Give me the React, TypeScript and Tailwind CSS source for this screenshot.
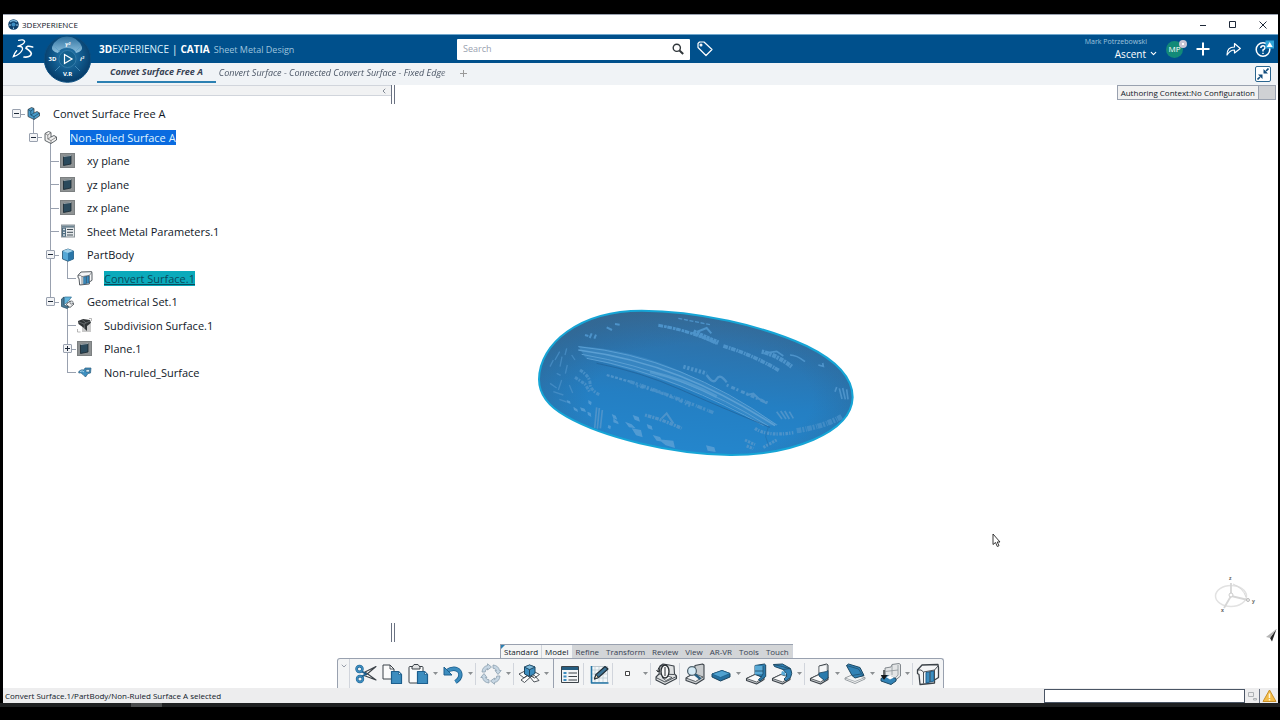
import React, { useState } from "react";
import { ChevronDown, ChevronLeft } from "lucide-react";
import clsx from "clsx";

interface TreeNode {
  id: string;
  label: string;
  // one letter per guide column: "." empty, "|" line, "t" branch, "l" last branch, "r" root
  guides: string;
  toggle?: "plus" | "minus";
  icon: React.ReactNode;
  tone?: "selected" | "linked";
  open?: boolean;
}

interface Tool {
  id: string;
  label: string;
  icon: React.ReactNode;
  menu?: boolean;
  divider?: "short" | "full";
}

const INK = "#3b4248";
const BLUE = "#3c8dbf";
const DEEP = "#1d5f8e";
const PALE = "#f4f5f6";
const GREY = "#c9cdd0";

/* ---------- tree icons ---------- */

const PartIcon = ({ fill, side }: { fill: string; side: string }) => (
  <svg width="15" height="15" viewBox="0 0 15 15" aria-hidden="true">
    <path
      d="M2 3.5 5.5 1.5 8 2.5V7l3-1.5 2.5 1.5v3L8 13.5 2 10.5Z"
      fill={fill}
      stroke={INK}
      strokeWidth=".8"
      strokeLinejoin="round"
    />
    <path d="M2 3.5 4.8 5V9L8 10.6 13.5 7M8 10.6v2.9M4.8 5 8 2.7M4.8 9 8 7" fill="none" stroke={side} strokeWidth=".7" />
  </svg>
);

const PlaneIcon = () => (
  <svg width="15" height="15" viewBox="0 0 15 15" aria-hidden="true">
    <rect x=".5" y=".5" width="14" height="14" fill="#8f9394" stroke="#7c8081" />
    <path d="M3.5 3.5 11 2.5v8.5l-7.5 1.5Z" fill="#2b4a5c" stroke="#16262f" strokeWidth=".8" />
    <path d="M3.5 3.5 11 2.5" stroke="#d5dde0" strokeWidth=".7" />
  </svg>
);

const ParametersIcon = () => (
  <svg width="14" height="14" viewBox="0 0 14 14" aria-hidden="true">
    <rect x=".5" y="1" width="13" height="12" fill="#e6e9eb" stroke="#8c9499" />
    <rect x="1" y="1.5" width="12" height="2.2" fill="#6f8592" />
    <rect x="1" y="3.7" width="4" height="9" fill="#4e6c80" />
    <path d="M2.2 5.5h1.6M2.2 8.3h1.6M2.2 11h1.6" stroke="#fff" strokeWidth="1.3" />
    <path d="M6 5.5h6M6 8.3h6M6 11h6" stroke="#3e4c55" strokeWidth="1" />
  </svg>
);

const BodyIcon = () => (
  <svg width="14" height="14" viewBox="0 0 14 14" aria-hidden="true">
    <path d="M1.5 3 7 1l5.5 2v8L7 13.2 1.5 11Z" fill="#55a8d6" stroke="#23506e" strokeWidth=".8" strokeLinejoin="round" />
    <path d="M1.5 3 7 5l5.5-2L7 1Z" fill="#9ed0ea" />
    <path d="M7 5v8.2L12.5 11V3Z" fill="#2a76a8" />
  </svg>
);

const ConvertIcon = ({ size }: { size: number }) => (
  <svg width={size} height={size} viewBox="0 0 24 24" aria-hidden="true">
    <path
      d="M1.500 8 6 3 22 2.500l.5 3v10L18.500 18v3L9 22l-5 .5-1-10-1.500-1Z"
      fill={PALE}
      stroke={INK}
      strokeWidth="1.300"
      strokeLinejoin="round"
    />
    <path d="m10 10.500 8-1.500v10l-8 2Z" fill={BLUE} stroke={DEEP} strokeWidth="1" />
    <path d="M1.500 8H5l2.500 2 11-2L22 4M7.500 10v11.500M18.500 8v10M14 9.500V20" fill="none" stroke={INK} strokeWidth=".9" />
  </svg>
);

const GeoSetIcon = () => (
  <svg width="15" height="14" viewBox="0 0 15 14" aria-hidden="true">
    <path d="M1.500 4 4 2v8l5 2-2 1.500-5.500-2Z" fill="#4c7c98" stroke="#21465b" strokeWidth=".7" />
    <path d="M4.500 2h7L8.500 6 4.500 9.500Z" fill="#62b5dd" stroke="#2f6d90" strokeWidth=".7" />
    <path d="m6 9.500 4-3.500 4 3-4 3.500Z" fill="#f3f3f3" stroke={INK} strokeWidth=".8" />
    <circle cx="11.500" cy="7.500" r="1.600" fill="#dfe3e5" stroke={INK} strokeWidth=".6" />
  </svg>
);

const SubdivisionIcon = () => (
  <svg width="15" height="15" viewBox="0 0 15 15" aria-hidden="true">
    <path d="M5 6h9v8H5Z" fill="#c9c9c9" />
    <path d="M1 3 6 1l7 1 1 3-4 3v5L7 10 1.500 6Z" fill="#2f3335" />
    <path d="M2 4l5 2 6-3M7 6l.5 4M5 1.500 9 5" stroke="#84898c" strokeWidth=".6" fill="none" />
    <path d="M.5 14v-3M.5 14h3M14.500 3V.5H12" stroke="#999" strokeWidth=".7" fill="none" />
  </svg>
);

const SurfaceIcon = () => (
  <svg width="14" height="12" viewBox="0 0 14 12" aria-hidden="true">
    <path d="M.8 5.500Q3 3 6 4l1-2h6l-.5 5L10 7.500 7.500 11 5 8.500Q3 6 .8 7Z" fill="#3d8fc0" stroke="#2c5d7c" strokeWidth=".7" />
    <path d="M8 3.500h3.500V6H8Z" fill="#d9eaf3" stroke="#2c5d7c" strokeWidth=".6" />
    <path d="M2 5.500q2.500-1.500 4 .5" stroke="#a8d4ea" fill="none" />
  </svg>
);

/* ---------- toolbar icons ---------- */

const Icon = ({ children }: { children: React.ReactNode }) => (
  <svg width="24" height="24" viewBox="0 0 24 24" fill="none" strokeLinejoin="round" aria-hidden="true">
    {children}
  </svg>
);

const CutIcon = () => (
  <Icon>
    <path d="M10 10.500 22 4.500l-10 8.500M10 13.500l12 4.500-11-8" fill="#fff" stroke={INK} strokeWidth="1.100" />
    <circle cx="5.500" cy="7" r="2.900" stroke={DEEP} strokeWidth="2.600" />
    <circle cx="6" cy="17" r="2.900" stroke={DEEP} strokeWidth="2.600" />
    <circle cx="5.500" cy="7" r="2.900" stroke={BLUE} strokeWidth="1.500" />
    <circle cx="6" cy="17" r="2.900" stroke={BLUE} strokeWidth="1.500" />
    <path d="M8 9.500 12 12l-4 2.500" stroke={DEEP} strokeWidth="2" />
  </Icon>
);

const Sheet = () => (
  <>
    <path d="M11.500 9.500h7l3 3V21.500h-10Z" fill={BLUE} stroke={DEEP} strokeWidth="1.200" />
    <path d="M18.500 9.500v3h3Z" fill="#cfe5f1" stroke={DEEP} strokeWidth=".8" />
  </>
);

const CopyIcon = () => (
  <Icon>
    <path d="M3 3h7l4 4v10H3Z" fill="#fbfbfb" stroke={INK} strokeWidth="1" />
    <path d="M10 3v4h4" stroke={INK} strokeWidth=".9" />
    <Sheet />
  </Icon>
);

const PasteIcon = () => (
  <Icon>
    <rect x="3" y="4.500" width="14" height="16.500" rx="1" fill="#fbfbfb" stroke={INK} strokeWidth="1" />
    <path d="M6 7V5l2-2.500h4L14 5v2Z" fill="#e0e2e3" stroke={INK} />
    <Sheet />
  </Icon>
);

const UndoIcon = () => (
  <Icon>
    <path d="M5 9.500Q14 4 18.500 9.500 21.500 15.500 14.500 20" stroke={DEEP} strokeWidth="4.200" />
    <path d="M5 9.500Q14 4 18.500 9.500 21.500 15.500 14.500 20" stroke={BLUE} strokeWidth="2.800" />
    <path d="M3 5v8h8Z" fill={BLUE} stroke={DEEP} />
  </Icon>
);

const UpdateIcon = () => (
  <Icon>
    <g fill="#c6d6e3" stroke="#8b9fae" strokeWidth=".8">
      {[0, 90, 180, 270].map((turn) => (
        <path key={turn} transform={`rotate(${turn} 12 12)`} d="M3 10Q3.500 4.500 8.500 3.500V1.800L12.500 5 8.500 8V6.500Q6.300 7.300 6.200 10Z" />
      ))}
    </g>
  </Icon>
);

const AssemblyIcon = () => (
  <Icon>
    <path d="m2 12 5-2.500 5 3-5 3.500ZM12 13l5-3.500 5.500 3-5 3.500ZM4 18l6-4.500 3 2-5.500 5ZM13 15l4.500-1.500 4.500 5-5 1.500Z" fill="#fdfdfd" stroke={INK} strokeWidth=".9" />
    <path d="m7.500 5 5-2 5.500 2v6.500l-5.500 3-5-2.500Z" fill={BLUE} stroke="#1f4660" />
    <path d="m7.500 5 5 2.500L18 5M12.500 7.500V14" stroke="#1f4660" />
    <path d="m7.500 5 5-2 5.500 2-5.500 2.500Z" fill="#7fbbdc" stroke="#1f4660" strokeWidth=".7" />
  </Icon>
);

const ListIcon = () => (
  <Icon>
    <rect x="3.500" y="4.500" width="17" height="16" fill="#f3f5f6" stroke={INK} />
    <rect x="4" y="5" width="16" height="3" fill="#265d80" />
    <path d="M5.500 11h3M5.500 14.500h3M5.500 18h3" stroke={BLUE} strokeWidth="2" />
    <path d="M10.500 11h8.500M10.500 14.500h8.500M10.500 18h8.500" stroke={INK} strokeWidth="1.200" />
  </Icon>
);

const SketchIcon = () => (
  <Icon>
    <path d="M4.500 4.500h16v16h-16Z" fill="#f3f7f9" stroke="#a5b4bd" strokeWidth=".7" />
    <path d="M8 4.500v16M12 4.500v16M16 4.500v16M4.500 8h16M4.500 12h16M4.500 16h16" stroke="#b8c6ce" strokeWidth=".7" />
    <path d="M4.500 4v17h17" stroke="#2475a5" strokeWidth="1.600" />
    <path d="m7.500 17 1.500-4.500L18 4.500l3 2.500-9.500 8.500Z" fill="#3e7698" stroke="#202d36" strokeWidth="1.100" />
    <path d="m7.500 17 1.500-4.500 2.500 3Z" fill="#f5e3c5" stroke="#202d36" />
  </Icon>
);

const PointIcon = () => (
  <Icon>
    <rect x="9.500" y="9.500" width="4" height="4" fill="#fff" stroke="#444" />
  </Icon>
);

const StampIcon = () => (
  <Icon>
    <path d="m2 15 3-3 1-8 3-2 6 1 5 1 .5 8 2 2v2.500L11 22.500 2 18Z" fill="#dfe1e2" stroke={INK} strokeWidth="1.100" />
    <path d="m2 15.500 9 4.500 11.500-5.500M5 12l15 .5" stroke={INK} strokeWidth=".9" />
    <path d="m8 15.500 4-2 6 2-6 3Z" fill="#fff" stroke={INK} strokeWidth=".8" />
    <ellipse cx="11" cy="9.500" rx="4" ry="6.500" fill="#f7f7f7" stroke="#24292d" strokeWidth="1.300" />
    <path d="M11 5v9M4 9.500Q4 4 8.500 3.500M2.500 8 4 10l2-1.500" stroke="#24292d" />
  </Icon>
);

const InspectIcon = () => (
  <Icon>
    <path d="m12 3.500 7.500-1.500L21 3v14l-8 5L3 18.500v-2.500l8-5Z" fill="#c9ccce" stroke={INK} strokeWidth="1.100" />
    <path d="M3 16 11 11.500 20 15l-7.500 4.500Z" fill={PALE} stroke={INK} strokeWidth=".8" />
    <path d="m11.500 12 6 5" stroke="#255e82" strokeWidth="2.400" />
    <circle cx="9" cy="9" r="4.400" fill="#d4eaf5" stroke="#51636e" strokeWidth="1.300" />
  </Icon>
);

const WallIcon = () => (
  <Icon>
    <path d="m3 12 10-3.500 8 3v3.500l-9.500 4-8.500-4Z" fill="#2470a1" stroke="#1b455f" strokeWidth="1" />
    <path d="m3 12 10-3.500 8 3-9.500 4Z" fill="#4fa2d1" stroke="#1b5a82" strokeWidth=".7" />
  </Icon>
);

// flat base plate shared by the sheet metal commands
const Base = () => (
  <>
    <path d="m2.500 16.500 8.500-4 9 3v2l-7.500 4.500-10-3.500Z" fill={GREY} stroke={INK} strokeWidth="1.100" />
    <path d="m2.500 16.500 8.500-4 9 3-7.500 4.500Z" fill="#fbfbfb" stroke={INK} strokeWidth=".8" />
  </>
);

const WallEdgeIcon = () => (
  <Icon>
    <Base />
    <path d="m11 3.500 9.500-1.500 1.200 1v11.500L16 19l-1.500-1.500 3-2.500-6.500-3Z" fill="#2a7bad" stroke="#1e4964" strokeWidth="1" />
    <path d="m11 3.500 8 .5v8l-8 .500Z" fill="#5aaad6" />
    <path d="M11 9h8M19 4v8l-2 3" stroke="#1e4964" strokeWidth=".8" />
  </Icon>
);

const ExtrudeIcon = () => (
  <Icon>
    <Base />
    <path d="m3.500 2.500 9-.5 8 4.500q2.500 5 0 9L16 19l-2-2q4-2 2.500-5.500L13 7.500 4.500 4.500Z" fill="#3283b6" stroke="#1e4964" strokeWidth="1" />
    <path d="m3.500 2.500 9 2 8 2.500M13 7.500l7-1" stroke="#1e4964" strokeWidth=".8" />
    <path d="m12 9 3 1 1 4-5-1.500Z" fill="#5aaad6" />
  </Icon>
);

const FlangeIcon = () => (
  <Icon>
    <Base />
    <path d="m11 4 7.500-2L20 3v13l-4 2-5-6Z" fill="#cfd2d4" stroke={INK} strokeWidth="1" />
    <path d="m11.500 4.500 6.500-1v6l-6.500 1.500Z" fill="#f4f5f6" />
    <path d="m11 11 7.500-1.500L20 8.500v7.500l-3.500 2.500-5.500-4.500Z" fill="#2a7bad" stroke="#1e4964" strokeWidth=".8" />
  </Icon>
);

const UnfoldIcon = () => (
  <Icon>
    <path d="m2 16 8-3.500 12 3v1.500l-10 4.500-10-4Z" fill="#f4f5f5" stroke="#8d9499" strokeWidth=".9" />
    <path d="m2 16 10 3.500 10-4" stroke="#8d9499" strokeWidth=".7" />
    <path d="m3.500 3.500 2-1.500L17 5.500l4 8-9 2.500-3-2.500Z" fill="#3283b6" stroke="#1e4964" strokeWidth="1" />
    <path d="m3.500 3.500 12 3.500 4.500 7M9 13.500l9-1.500" stroke="#1e4964" strokeWidth=".7" />
  </Icon>
);

const FoldIcon = () => (
  <Icon>
    <path d="m7 6 6-1 1-2.500 7-1 1.500 1V14l-6 5-9-3Z" fill="#e2e4e5" stroke="#767d82" strokeWidth=".9" />
    <path d="M7 9.500 20 8M14 3v10M20 3v10l-4 4" stroke="#8d9499" strokeWidth=".8" />
    <path d="m3 16.500 6-3 9 3v2.500l-5 3.500-10-3.500Z" fill="#3283b6" stroke="#1e4964" strokeWidth="1" />
    <path d="m8 15 4-1.500 4 2-4 2Z" fill="#fff" />
    <path d="M6 8v8M3.500 13.500 6 17l2.500-3.500Z" fill="#15191c" stroke="#15191c" strokeWidth="1.200" />
  </Icon>
);

/* ---------- data ---------- */

const treeNodes: TreeNode[] = [
  { id: "root", label: "Convet Surface Free A", guides: "r", toggle: "minus", icon: <PartIcon fill="#4a9ccb" side="#17435f" />, open: true },
  { id: "shape", label: "Non-Ruled Surface A", guides: ".l", toggle: "minus", icon: <PartIcon fill="#f1f1f1" side="#666" />, tone: "selected", open: true },
  { id: "xy", label: "xy plane", guides: "..t", icon: <PlaneIcon /> },
  { id: "yz", label: "yz plane", guides: "..t", icon: <PlaneIcon /> },
  { id: "zx", label: "zx plane", guides: "..t", icon: <PlaneIcon /> },
  { id: "params", label: "Sheet Metal Parameters.1", guides: "..t", icon: <ParametersIcon /> },
  { id: "body", label: "PartBody", guides: "..t", toggle: "minus", icon: <BodyIcon />, open: true },
  { id: "convert", label: "Convert Surface.1", guides: "..|l", icon: <ConvertIcon size={16} />, tone: "linked" },
  { id: "geoset", label: "Geometrical Set.1", guides: "..l", toggle: "minus", icon: <GeoSetIcon />, open: true },
  { id: "subdiv", label: "Subdivision Surface.1", guides: "...t", icon: <SubdivisionIcon /> },
  { id: "plane1", label: "Plane.1", guides: "...t", toggle: "plus", icon: <PlaneIcon /> },
  { id: "nonruled", label: "Non-ruled_Surface", guides: "...l", icon: <SurfaceIcon /> },
];

const tools: Tool[] = [
  { id: "cut", label: "Cut", icon: <CutIcon /> },
  { id: "copy", label: "Copy", icon: <CopyIcon /> },
  { id: "paste", label: "Paste", icon: <PasteIcon />, menu: true },
  { id: "undo", label: "Undo", icon: <UndoIcon />, menu: true, divider: "short" },
  { id: "update", label: "Update", icon: <UpdateIcon />, menu: true, divider: "short" },
  { id: "assembly", label: "Assembly", icon: <AssemblyIcon />, menu: true, divider: "full" },
  { id: "parameters", label: "Parameters", icon: <ListIcon />, divider: "short" },
  { id: "sketch", label: "Sketch", icon: <SketchIcon />, divider: "short" },
  { id: "point", label: "Point", icon: <PointIcon />, menu: true, divider: "short" },
  { id: "stamp", label: "Stamp", icon: <StampIcon />, divider: "short" },
  { id: "recognize", label: "Recognize", icon: <InspectIcon /> },
  { id: "wall", label: "Wall", icon: <WallIcon />, menu: true },
  { id: "edge", label: "Wall on edge", icon: <WallEdgeIcon /> },
  { id: "extrude", label: "Extrusion", icon: <ExtrudeIcon />, menu: true, divider: "short" },
  { id: "flange", label: "Flange", icon: <FlangeIcon />, menu: true },
  { id: "unfold", label: "Unfold", icon: <UnfoldIcon />, menu: true },
  { id: "fold", label: "Fold", icon: <FoldIcon />, menu: true, divider: "short" },
  { id: "convert", label: "Convert surface", icon: <ConvertIcon size={24} /> },
];

const sections = ["Standard", "Model", "Refine", "Transform", "Review", "View", "AR-VR", "Tools", "Touch"];

/* ---------- header ---------- */

const Compass = () => (
  <button aria-label="Compass" className="absolute left-10 top-0 size-12">
    <svg width="48" height="48" viewBox="0 0 48 48" aria-hidden="true">
      <defs>
        <radialGradient id="dial" cx="50%" cy="45%" r="55%">
          <stop offset="0" stopColor="#2a7fb4" />
          <stop offset=".6" stopColor="#0f5688" />
          <stop offset="1" stopColor="#063a66" />
        </radialGradient>
        <linearGradient id="north" x1="0" y1="0" x2="0" y2="1">
          <stop offset="0" stopColor="#2f719f" />
          <stop offset="1" stopColor="#8cc0de" />
        </linearGradient>
      </defs>
      <circle cx="24.500" cy="24" r="23.300" fill="url(#dial)" stroke="#0a4f82" />
      <path d="M9 12Q13 2 24 1.500 35 2 39 12q1 4-6 6-2-5-9-5t-9 5q-7-2-6-6Z" fill="url(#north)" />
      <circle cx="24.500" cy="24" r="8.500" fill="#13608f" stroke="#3d83ad" strokeWidth=".7" />
      <path d="m12 12 5 5M37 12l-5 5M12 36l5-5M37 36l-5-5" stroke="#5a9dc6" strokeWidth=".7" />
      <path d="m21.500 19.500 7.500 4.500-7.500 4.500Z" stroke="#fff" strokeWidth="1.200" fill="none" />
      <g fill="#fff" fontFamily="Noto Sans, sans-serif" fontWeight="700" fontSize="6" textAnchor="middle">
        <text x="24.500" y="12" fontStyle="italic">Y²</text>
        <text x="9.500" y="26">3D</text>
        <text x="39" y="26" fontStyle="italic">i²</text>
        <text x="24.500" y="41">V.R</text>
      </g>
    </svg>
  </button>
);

const Logo = () => (
  <svg width="22" height="20" viewBox="0 0 66 60" fill="none" stroke="#fff" strokeWidth="4" strokeLinecap="round" aria-hidden="true">
    <path d="M20 4q16-4 18 4-2 9-22 14 18-2 15 10Q24 47 4 53q4-12 10-18" />
    <path d="M62 24Q42 18 42 28q14 8 16 16-2 12-22 10" strokeWidth="5" />
  </svg>
);

const TitleBar = () => (
  <div className="flex h-5 items-center border-t border-gray-400 bg-white pl-[5px] text-[8px] text-gray-900">
    <svg width="11" height="11" viewBox="0 0 11 11" aria-hidden="true">
      <circle cx="5.500" cy="5.500" r="5.300" fill="#0f3f6b" />
      <path d="M2 3q3.500-3 7 0" stroke="#7db7dc" strokeWidth="1.500" fill="none" />
      <circle cx="5.500" cy="5.500" r="2" fill="#3c8cc2" />
      <path d="M1 6h2M8 6h2M5.500 8.500v1.500" stroke="#9cc8e4" />
    </svg>
    <span className="ml-[3px]">3DEXPERIENCE</span>
    <div className="ml-auto flex text-gray-800">
      <button aria-label="Minimize" className="flex w-[30px] justify-center">
        <svg width="8" height="8" viewBox="0 0 8 8"><path d="M1 4.500h6" stroke="currentColor" /></svg>
      </button>
      <button aria-label="Maximize" className="flex w-[30px] justify-center">
        <svg width="8" height="8" viewBox="0 0 8 8"><path d="M.5.5h6v6h-6Z" stroke="currentColor" fill="none" /></svg>
      </button>
      <button aria-label="Close" className="flex w-[30px] justify-center">
        <svg width="8" height="8" viewBox="0 0 8 8"><path d="m.5.500 7 7m0-7-7 7" stroke="currentColor" /></svg>
      </button>
    </div>
  </div>
);

const Header = () => (
  <header className="relative z-10 flex h-[29px] items-center border-t border-[#6fa6cc] bg-[#00508c] text-white">
    <div className="flex w-[454px] shrink-0 items-center pl-[9px]">
      <Logo />
      <Compass />
      <div className="ml-[65px] flex items-baseline text-[10px]">
        <span className="font-bold">3D</span>
        <span className="text-sky-100">EXPERIENCE</span>
        <span className="mx-[3px]">|</span>
        <span className="font-bold">CATIA</span>
        <span className="ml-1 text-[9px] text-[#9fc4de]">Sheet Metal Design</span>
      </div>
    </div>
    <label className="flex h-[21px] w-[233px] items-center rounded-[1px] bg-white pr-[6px]">
      <input
        type="text"
        aria-label="Search"
        placeholder="Search"
        className="min-w-0 flex-1 bg-transparent px-[6px] text-[9px] text-gray-800 outline-none placeholder:text-gray-400"
      />
      <svg width="12" height="12" viewBox="0 0 12 12" fill="none" stroke="#30363a" aria-hidden="true">
        <circle cx="4.800" cy="4.800" r="3.600" strokeWidth="1.400" />
        <path d="m7.500 7.500 3.700 3.500" strokeWidth="2" />
      </svg>
    </label>
    <button aria-label="Tags" className="ml-[7px]">
      <svg width="16" height="16" viewBox="0 0 16 16" fill="none" stroke="#fff" strokeWidth="1.200" strokeLinejoin="round">
        <path d="M1 2.500 2.500 1 7 1l8 7.500-6 6L1 6.500Z" />
        <circle cx="4" cy="4" r=".9" />
      </svg>
    </button>

    <div className="ml-auto flex items-center pr-1">
      <div className="flex flex-col items-end">
        <span className="text-[7px] leading-[9px] text-[#9fc4de]">Mark Potrzebowski</span>
        <button className="mr-[-11px] flex items-center gap-[3px] text-[10px] leading-4">
          Ascent
          <ChevronDown size={9} strokeWidth={3} />
        </button>
      </div>
      <button aria-label="Profile" className="relative ml-[19px] flex size-[17px] items-center justify-center rounded-full bg-[#128a78] text-[8px]">
        MP
        <span className="absolute -right-1 -top-[1px] flex size-2 items-center justify-center rounded-full bg-[#c9c4d4]">
          <span className="size-[2px] bg-white" />
        </span>
      </button>
      <button aria-label="Add" className="ml-[13px]">
        <svg width="14" height="14" viewBox="0 0 14 14"><path d="M7 .5v13M.5 7h13" stroke="#fff" strokeWidth="2" /></svg>
      </button>
      <button aria-label="Share" className="ml-4">
        <svg width="15" height="14" viewBox="0 0 15 14" fill="none" stroke="#fff" strokeWidth="1.200" strokeLinejoin="round">
          <path d="M1 13Q1 5 8.500 5V1.500L14.300 6.500 8.500 11V8Q4 8 1 13Z" />
        </svg>
      </button>
      <button aria-label="Help" className="ml-[14px]">
        <svg width="19" height="18" viewBox="0 0 19 18" fill="none">
          <circle cx="8" cy="9.500" r="6.800" stroke="#fff" strokeWidth="1.500" />
          <path d="M5.800 8Q6 5.800 8 5.800T10 7.800Q10 9 8 10v1.500M8 12.700V14" stroke="#fff" strokeWidth="1.500" />
          <rect x="10.500" y=".5" width="8.500" height="8" fill="#2fa4d8" />
          <path d="m14.700 2 3 5h-6Z" fill="#fff" />
        </svg>
      </button>
    </div>
  </header>
);

const DocumentTabs = () => (
  <nav className="flex h-[22px] items-stretch bg-[#f0f3f6] pl-[94px] text-[9px] italic text-gray-600">
    <a href="#free-a" className="mb-[2px] flex items-center border-b-2 border-[#2b80b2] px-[13px] font-bold text-gray-700">
      Convet Surface Free A
    </a>
    <a href="#connected" className="ml-[3px] mb-[2px] flex w-[233px] items-center overflow-hidden whitespace-nowrap mask-r-from-95%">
      Convert Surface - Connected Convert Surface - Fixed Edge
    </a>
    <button aria-label="New tab" className="ml-2 mb-[2px] flex items-center">
      <svg width="7" height="7" viewBox="0 0 7 7"><path d="M3.500 0v7M0 3.500h7" stroke="#999" /></svg>
    </button>
    <button aria-label="Exit full screen" className="ml-auto mr-[7px] flex size-4 items-center justify-center self-center rounded-[2px] border border-[#2b6690] bg-white">
      <svg width="12" height="12" viewBox="0 0 12 12" fill="#124d7d" stroke="#124d7d">
        <path d="m11.500.500-2.500 2.500M.5 11.500 3 9" strokeWidth="1.600" />
        <path d="M6.500 1v4.500H11ZM5.500 11V6.500H1Z" stroke="none" />
      </svg>
    </button>
  </nav>
);

/* ---------- specification tree ---------- */

const Guide = ({ kind, toggle }: { kind: string; toggle?: "plus" | "minus" }) => (
  <span className="relative flex w-[17px] shrink-0 items-center justify-center self-stretch">
    {(kind === "|" || kind === "t") && <span className="absolute inset-y-0 left-2 w-px bg-gray-400" />}
    {kind === "l" && <span className="absolute bottom-1/2 left-2 top-0 w-px bg-gray-400" />}
    {(kind === "t" || kind === "l" || kind === "r") && <span className="absolute left-2 right-0 top-1/2 h-px bg-gray-400" />}
    {toggle && (
      <span className="relative flex size-[9px] items-center justify-center rounded-[1px] border border-gray-400 bg-gray-100">
        <span className="h-px w-[5px] bg-gray-800" />
        {toggle === "plus" && <span className="absolute h-[5px] w-px bg-gray-800" />}
      </span>
    )}
  </span>
);

const SpecTree = () => (
  <ul className="grid h-[282px] grid-rows-12 pl-[5px] text-[11px] leading-[15px] text-gray-900">
    {treeNodes.map((node) => (
      <li key={node.id} className="flex min-h-0 items-center">
        {node.guides.split("").map((kind, index) => (
          <Guide key={index} kind={kind} toggle={index === node.guides.length - 1 ? node.toggle : undefined} />
        ))}
        <span className="relative flex w-[17px] shrink-0 items-center justify-center self-stretch">
          {node.open && <span className="absolute bottom-0 left-2 top-1/2 w-px bg-gray-400" />}
          <span className="relative">{node.icon}</span>
        </span>
        <button
          className={clsx(
            "ml-[11px] whitespace-nowrap",
            node.tone === "selected" && "bg-[#0a6be0] text-sky-100",
            node.tone === "linked" && "bg-[#0aaabb] text-[#0b4a5c] underline"
          )}
        >
          {node.label}
        </button>
      </li>
    ))}
  </ul>
);

/* ---------- 3D view ---------- */

const Model = () => (
  <svg width="330" height="165" viewBox="0 0 990 495" className="absolute left-[135px] top-[215px]" aria-label="Non-ruled surface">
    <defs>
      <linearGradient id="shade" x1=".6" y1="0" x2=".4" y2="1">
        <stop offset="0" stopColor="#3a6d99" />
        <stop offset=".3" stopColor="#2c74ae" />
        <stop offset=".6" stopColor="#247fc3" />
        <stop offset="1" stopColor="#2488cf" />
      </linearGradient>
      <radialGradient id="rim" cx=".52" cy=".6" r=".56">
        <stop offset=".6" stopColor="#2f5f88" stopOpacity="0" />
        <stop offset="1" stopColor="#355f82" stopOpacity=".5" />
      </radialGradient>
      <clipPath id="hull">
        <path d="M27 238C28 130 150 32 335 32 500 32 700 78 830 138 920 182 968 235 968 292 965 400 780 466 600 465 420 462 220 412 110 350 55 320 27 285 27 238Z" />
      </clipPath>
    </defs>
    <g clipPath="url(#hull)">
      <path d="M0 0h990v495H0Z" fill="url(#shade)" />
      <path d="M0 0h990v495H0Z" fill="url(#rim)" />
      {/* long reflection band */}
      <path d="M145 138Q310 150 450 213T745 375L700 378Q600 310 450 259T165 172Z" fill="#4390cb" opacity=".55" />
      <g fill="none" stroke="#5b9fd3">
        <path d="M145 140Q300 155 450 215T740 375" strokeWidth="3" />
        <path d="M145 150Q310 172 450 228T735 377" strokeWidth="5" />
        <path d="M155 163Q310 190 450 244T715 378" strokeWidth="3" />
        <path d="M170 175Q310 200 450 257T700 376" strokeWidth="3" />
        <path d="M360 215Q470 240 560 290" strokeWidth="9" opacity=".7" />
      </g>
      <path d="M200 190Q330 215 450 268T720 382" stroke="#1f5f96" strokeWidth="2" fill="none" />
      {/* facet noise */}
      <g fill="none" stroke="#4d93ca">
        <path d="M385 76Q480 92 560 130" strokeWidth="9" strokeDasharray="14 3 8 2" />
        <path d="M490 95Q520 110 565 128" strokeWidth="14" strokeDasharray="9 2" />
        <path d="M445 55 540 74" strokeWidth="4" strokeDasharray="12 5" />
        <path d="M500 96l30-12 14 16" strokeWidth="6" />
        <path d="M580 138Q670 165 748 212" strokeWidth="11" strokeDasharray="14 3 5 2" />
        <path d="M695 155Q740 165 785 200" strokeWidth="13" strokeDasharray="7 3 12 2" />
        <path d="M700 160l40-6 20 14M780 165q20 0 45 20M865 195l15 4-2-10" strokeWidth="5" />
        <path d="M460 200 530 220" strokeWidth="12" strokeDasharray="7 5" />
        <path d="M530 225q20 30 30 12t30 10" strokeWidth="7" />
        <path d="M590 255 715 310" strokeWidth="9" strokeDasharray="6 9 12 5" />
        <path d="M650 285l20-4 15 14 25 15" strokeWidth="6" />
        <path d="M230 225 300 245" strokeWidth="7" strokeDasharray="9 4" />
        <path d="M300 245Q420 285 550 338" strokeWidth="10" strokeDasharray="15 3 7 6 3 2" opacity=".8" />
        <path d="M320 258Q400 275 480 318" strokeWidth="8" strokeDasharray="5 6 11 9" opacity=".8" />
        <path d="M345 345Q400 360 455 385" strokeWidth="10" strokeDasharray="6 3 11 3" />
        <path d="M395 355l15-15 20 30" strokeWidth="6" />
        <path d="M200 322l-6 62M208 324l-6 62M217 330l-6 55" strokeWidth="5" />
        <path d="M150 210q30 20 30 40t30 35M135 232l30 20 15 25" strokeWidth="9" strokeDasharray="10 3 5 4" opacity=".8" />
        <path d="M740 335l16 22M752 333l16 24M764 333l14 24M778 335l12 20" strokeWidth="5" />
        <path d="M928 265l8 32M938 264l8 34M950 268l4 30M915 275l5-14" strokeWidth="5" />
        <path d="M675 385Q710 410 790 398" strokeWidth="10" strokeDasharray="8 3 4 4" />
        <path d="M800 392Q880 380 935 350" strokeWidth="16" strokeDasharray="14 3 6 4 3 2" opacity=".7" />
        <path d="M645 420l30 14M650 438l20 8M700 442l40-22" strokeWidth="9" strokeDasharray="7 3" />
        <path d="M165 105l10 3M185 100l-6 14M198 104l-5 12M230 82l16 8M255 72l14 2" strokeWidth="6" />
        <path d="M75 180l14-25M90 200l6-30M105 165l5-20M60 250l20 14M70 275l30 10M95 240l-10 30M125 165l10 15M60 200l10-20M80 220l12 6M112 195l-6 26M118 255l10 24M88 298l22 8" strokeWidth="4" opacity=".7" />
      </g>
      <g fill="#5a9fd5" opacity=".85">
        <path d="M245 342l12 5 5 12-12-4ZM250 355l14 10 2 8-16-6ZM285 365l20 8 12 12-20-3ZM308 345l18 6 4 14-16-6ZM305 385l28 5 5 22-20-6ZM350 372l15 6 3 12-14-5ZM368 405l22 6 8 14-18-3ZM385 418l45 4 5 22-28-8ZM528 436l25 6 4 14-24-4Z" />
        <path d="M150 322l14 4 4 10-14-4ZM172 335l10 4 2 12-10-6ZM130 320l12 8 2 8-12-6ZM175 300l10 6-2 10-8-6ZM235 375l8 3-2 10-8-5ZM110 300l10 4 2 8-10-4Z" />
      </g>
      <path d="M715 380l-8 30 10 30" stroke="#2370ac" strokeWidth="2" fill="none" />
    </g>
    <path
      d="M27 238C28 130 150 32 335 32 500 32 700 78 830 138 920 182 968 235 968 292 965 400 780 466 600 465 420 462 220 412 110 350 55 320 27 285 27 238Z"
      fill="none"
      stroke="#16a5d6"
      strokeWidth="6"
    />
  </svg>
);

const AxisTriad = () => (
  <svg width="46" height="40" viewBox="0 0 46 40" fill="none" className="absolute bottom-[29px] right-[21px]" aria-hidden="true">
    <ellipse cx="20" cy="21" rx="15.500" ry="10.500" stroke="#e2e2e2" strokeWidth="1.500" />
    <path d="M20 8v13l17 4M20 21l-7 12" stroke="#d6d6d6" strokeWidth="1.800" />
    <path d="M22 9q10 4 13 13" stroke="#d8d8d8" />
    <circle cx="20" cy="20" r="2" fill="#fff" stroke="#ccc" />
    <circle cx="37" cy="25" r="1.500" fill="#eee" stroke="#bbb" />
    <g fontFamily="Noto Sans, sans-serif" fontSize="5" fontWeight="700" fill="#666">
      <text x="18" y="5">z</text>
      <text x="41" y="28">y</text>
      <text x="10" y="37">x</text>
    </g>
  </svg>
);

const Viewport = () => (
  <section className="relative min-w-0 flex-1" aria-label="3D view">
    <div className="ml-auto mr-[2px] flex h-[15px] w-fit items-stretch border border-gray-400 bg-[#f1f1f1] text-[8px] leading-[13px] text-gray-900">
      <span className="px-[3px]">Authoring Context:No Configuration</span>
      <button aria-label="Context options" className="w-[17px] border-l border-gray-400 bg-[#cfd1d4]" />
    </div>
    <Model />
    <AxisTriad />
    <svg width="9" height="14" viewBox="0 0 9 14" className="absolute left-[597px] top-[448px]" aria-hidden="true">
      <path d="M1 1v10.500l2.500-2 1.800 4 1.700-.8-1.800-3.700H8Z" fill="#fff" stroke="#222" strokeWidth=".9" />
    </svg>
    <svg width="11" height="13" viewBox="0 0 11 13" className="absolute bottom-[2px] right-[1px]" aria-hidden="true">
      <path d="M10.500 0 6 12.500 4 9Z" fill="#222" />
      <path d="M10.500 0 0 8l4 1Z" fill="#b5b5b5" />
    </svg>
  </section>
);

const Splitter = () => (
  <div className="flex w-1 shrink-0 flex-col justify-between pb-[2px]">
    <span className="h-[19px] border-x border-gray-500" />
    <span className="h-[19px] border-x border-gray-500" />
  </div>
);

/* ---------- action bar ---------- */

const ActionBar = () => {
  const [active, setActive] = useState("Model");

  return (
    <div className="mx-auto w-fit">
      <div className="ml-[163px] flex w-fit border-l border-t border-gray-400 text-[8px] leading-[13px] text-gray-700">
        {sections.map((name) => (
          <button
            key={name}
            onClick={() => setActive(name)}
            className={clsx(
              "relative border-r border-gray-300 px-[3px]",
              name === active || name === "Standard" ? "bg-[#f4f5f5] text-gray-900" : "bg-[#d3d5d7]"
            )}
          >
            {name === "Standard" && (
              <span className="absolute left-0 top-0 border-r-4 border-t-4 border-r-transparent border-t-[#2b80b2]" />
            )}
            {name}
          </button>
        ))}
      </div>
      <div className="flex h-[30px] items-stretch rounded-t-[3px] border border-b-0 border-gray-400 bg-[#f3f4f5]">
        <button aria-label="Collapse action bar" className="flex w-3 justify-center border-r border-gray-300 pt-[3px] text-gray-500">
          <ChevronDown size={8} />
        </button>
        <div className="flex items-center gap-px px-[3px]">
          {tools.map((tool) => (
            <React.Fragment key={tool.id}>
              <button aria-label={tool.label} className="flex w-[25px] justify-center">
                {tool.icon}
              </button>
              {tool.menu && (
                <button aria-label={`${tool.label} options`} className="flex w-2 justify-center">
                  <svg width="5" height="3" viewBox="0 0 5 3"><path d="M0 0h5L2.500 3Z" fill="#8b8f92" /></svg>
                </button>
              )}
              {tool.divider === "short" && <span className="mr-px h-[22px] w-px bg-gray-300" />}
              {tool.divider === "full" && <span className="mx-[2px] w-px self-stretch bg-gray-400" />}
            </React.Fragment>
          ))}
        </div>
      </div>
    </div>
  );
};

const StatusBar = () => (
  <footer className="flex h-[15px] items-center bg-[#ededee] pl-[2px] text-[8px] text-gray-900">
    <span>Convert Surface.1/PartBody/Non-Ruled Surface A selected</span>
    <input type="text" aria-label="Power input" className="ml-auto h-[14px] w-[201px] border border-gray-600 bg-white px-1 outline-none" />
    <button aria-label="Windows" className="ml-px flex h-[14px] w-[14px] items-center justify-center border-r border-gray-500">
      <svg width="10" height="10" viewBox="0 0 10 10" fill="none" stroke="#aeb2b5">
        <path d="M.5 1.500h5v4h-5ZM5.500 7.500h3v1.500h-3Z" />
      </svg>
    </button>
    <button aria-label="Warnings" className="flex w-[18px] justify-center">
      <svg width="15" height="14" viewBox="0 0 15 14">
        <path d="M7.500 1 14 12.500H1Z" fill="#f3bd4a" stroke="#c98f27" strokeLinejoin="round" />
        <path d="M7.500 4.500v4.500M7.500 10v1.500" stroke="#fff6df" strokeWidth="1.500" />
      </svg>
    </button>
  </footer>
);

export default function App() {
  return (
    <div className="flex min-h-screen flex-col bg-black pt-[14px] font-['Open_Sans','Noto_Sans',sans-serif]">
      <div className="ml-[3px] mr-[2px] flex flex-1 flex-col bg-white">
        <TitleBar />
        <Header />
        <DocumentTabs />
        <main className="flex flex-1">
          <aside className="w-[388px] shrink-0">
            <div className="mb-[6px] flex h-[11px] items-center justify-end border-y border-gray-300 bg-[#f1f2f3] pr-[3px] text-gray-600">
              <button aria-label="Collapse tree">
                <ChevronLeft size={8} />
              </button>
            </div>
            <SpecTree />
          </aside>
          <Splitter />
          <Viewport />
        </main>
        <ActionBar />
        <StatusBar />
      </div>
      {/* sliver of the desktop taskbar */}
      <div className="mb-[13px] h-1 bg-[#1e2021] pl-[131px]">
        <div className="h-full w-[31px] bg-[#4a4c4d]" />
      </div>
    </div>
  );
}
